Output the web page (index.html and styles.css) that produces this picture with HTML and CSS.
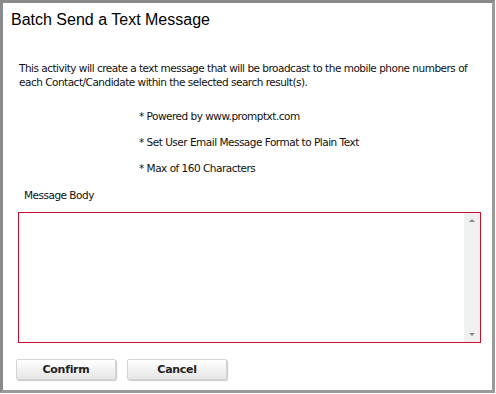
FILE: index.html
```html
<!DOCTYPE html>
<html lang="en">
<head>
  <meta charset="UTF-8" />
  <title>Batch Send a Text Message</title>
  <link rel="stylesheet" href="styles.css">
</head>
<body>

  <div class="dialog">
    <h1>Batch Send a Text Message</h1>

    <p class="intro">This activity will create a text message that will be broadcast to the mobile phone numbers of each Contact/Candidate within the selected search result(s).</p>

    <ul class="notes">
      <li>* Powered by www.promptxt.com</li>
      <li>* Set User Email Message Format to Plain Text</li>
      <li>* Max of 160 Characters</li>
    </ul>

    <label class="field-label" for="msgBody">Message Body</label>
    <div class="msg-box">
      <textarea id="msgBody"></textarea>
      <div class="scroll">
        <span class="arrow up"></span>
        <span class="arrow down"></span>
      </div>
    </div>

    <div class="actions">
      <button type="button" class="btn">Confirm</button>
      <button type="button" class="btn">Cancel</button>
    </div>
  </div>

</body>
</html>
```

FILE: styles.css
```css
html, body {
  margin: 0;
  padding: 0;
  background: #ffffff;
}

.dialog {
  box-sizing: border-box;
  width: 495px;
  height: 393px;
  border-top: 3px solid #8a8a8a;
  border-left: 3px solid #8a8a8a;
  border-right: 3px solid #9a9a9a;
  border-bottom: 3px solid #9a9a9a;
  font-family: Tahoma, "DejaVu Sans", sans-serif;
  font-size: 10.5px;
  letter-spacing: -0.5px;
  color: #111;
}

h1 {
  margin: 0;
  padding: 8px 0 0 8px;
  font-family: "Liberation Sans", Arial, sans-serif;
  font-size: 16px;
  font-weight: normal;
  letter-spacing: 0;
  line-height: 18px;
  color: #000;
}

.intro {
  margin: 32px 10px 0 16px;
  line-height: 14px;
}

.notes {
  list-style: none;
  margin: 20px 0 0 136px;
  padding: 0;
}

.notes li {
  line-height: 14px;
  margin-bottom: 12px;
}

.notes li:last-child {
  margin-bottom: 13px;
}

.field-label {
  display: block;
  margin: 0 0 0 21px;
  line-height: 14px;
}

.msg-box {
  display: flex;
  margin: 10px 11px 0 15px;
  height: 129px;
  border: 1px solid #c8102e;
}

.msg-box textarea {
  flex: 1;
  border: none;
  outline: none;
  resize: none;
  margin: 0;
  padding: 2px;
  font-family: inherit;
  font-size: 11px;
}

.scroll {
  width: 16px;
  background: #f0f0f0;
  display: flex;
  flex-direction: column;
  justify-content: space-between;
  align-items: center;
  padding: 6px 0;
}

.arrow {
  width: 0;
  height: 0;
  border-left: 3px solid transparent;
  border-right: 3px solid transparent;
}

.arrow.up { border-bottom: 3px solid #888; }
.arrow.down { border-top: 3px solid #888; }

.actions {
  display: flex;
  gap: 11px;
  margin: 16px 0 0 13px;
}

.btn {
  width: 100px;
  height: 21px;
  padding: 0;
  border: 1px solid #d4d4d4;
  border-radius: 2px;
  background: linear-gradient(#ffffff, #e6e6e6);
  box-shadow: 1px 1px 1px #c8c8c8;
  font-family: Tahoma, "DejaVu Sans", sans-serif;
  font-size: 11px;
  font-weight: bold;
  letter-spacing: -0.3px;
  color: #222;
}
```
